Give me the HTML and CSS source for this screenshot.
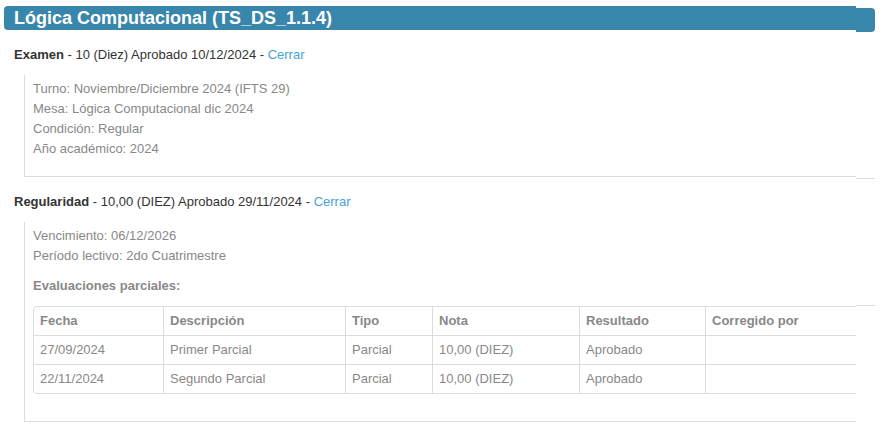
FILE: index.html
```html
<!DOCTYPE html>
<html lang="es">
<head>
<meta charset="utf-8">
<title>Lógica Computacional</title>
<link rel="stylesheet" href="styles.css">
</head>
<body>
<div class="page">
  <div class="main">
    <div class="inner">
      <h2 class="title">Lógica Computacional (TS_DS_1.1.4)</h2>

      <div class="item-head head-exam"><b>Examen</b> - 10 (Diez) Aprobado 10/12/2024 - <a href="#">Cerrar</a></div>
      <div class="detail detail-exam">
        <div>Turno: Noviembre/Diciembre 2024 (IFTS 29)</div>
        <div>Mesa: Lógica Computacional dic 2024</div>
        <div>Condición: Regular</div>
        <div>Año académico: 2024</div>
      </div>

      <div class="item-head head-reg"><b>Regularidad</b> - 10,00 (DIEZ) Aprobado 29/11/2024 - <a href="#">Cerrar</a></div>
      <div class="detail detail-reg">
        <div>Vencimiento: 06/12/2026</div>
        <div>Período lectivo: 2do Cuatrimestre</div>
        <div class="sub">Evaluaciones parciales:</div>
        <table class="grid">
          <thead>
            <tr><th class="c1">Fecha</th><th class="c2">Descripción</th><th class="c3">Tipo</th><th class="c4">Nota</th><th class="c5">Resultado</th><th class="c6">Corregido por</th></tr>
          </thead>
          <tbody>
            <tr><td>27/09/2024</td><td>Primer Parcial</td><td>Parcial</td><td>10,00 (DIEZ)</td><td>Aprobado</td><td></td></tr>
            <tr><td>22/11/2024</td><td>Segundo Parcial</td><td>Parcial</td><td>10,00 (DIEZ)</td><td>Aprobado</td><td></td></tr>
          </tbody>
        </table>
      </div>
    </div>
  </div>
  <div class="strip">
    <div class="strip-bar"></div>
    <div class="strip-line strip-line-1"></div>
    <div class="strip-line strip-line-2"></div>
  </div>
</div>
</body>
</html>
```

FILE: styles.css
```css
html, body {
  margin: 0;
  padding: 0;
  background: #fff;
}
body {
  font-family: "Liberation Sans", Arial, sans-serif;
  font-size: 13px;
  color: #333;
}
.page {
  display: flex;
  align-items: flex-start;
  padding-left: 4px;
}
.main {
  width: 852px;
  overflow: hidden;
  flex: none;
}
.inner {
  width: 900px;
}
.title {
  margin: 6px 0 0 0;
  height: 24px;
  line-height: 24px;
  background: #3986ac;
  color: #fff;
  font-size: 18px;
  font-weight: bold;
  padding-left: 10px;
  border-radius: 4px 0 0 4px;
}
.item-head {
  margin-left: 10px;
  line-height: 20px;
  color: #333;
}
.head-exam {
  margin-top: 15px;
}
.head-reg {
  margin-top: 15px;
}
.item-head b {
  font-weight: bold;
}
.item-head a {
  color: #45a3d5;
  text-decoration: none;
}
.detail {
  margin: 10px 0 0 20px;
  border-left: 1px solid #dcdcdc;
  border-bottom: 1px solid #dcdcdc;
  padding: 4px 0 17px 8px;
  color: #888;
  line-height: 20px;
}
.detail-reg {
  padding-bottom: 27px;
}
.sub {
  font-weight: bold;
  margin-top: 10px;
}
.grid {
  border-collapse: separate;
  border-spacing: 0;
  margin-top: 10px;
  border: 1px solid #dcdcdc;
  border-radius: 4px;
  width: 860px;
  color: #888;
}
.grid th, .grid td {
  text-align: left;
  padding: 0 6px;
  height: 28px;
  border-left: 1px solid #dcdcdc;
  border-top: 1px solid #dcdcdc;
  font-size: 13px;
}
.grid tr th:first-child, .grid tr td:first-child {
  border-left: none;
}
.grid thead th {
  border-top: none;
  font-weight: bold;
}
.c1 { width: 117px; }
.c2 { width: 169px; }
.c3 { width: 74px; }
.c4 { width: 134px; }
.c5 { width: 113px; }
.strip {
  width: 19px;
  flex: none;
  display: flex;
  flex-direction: column;
}
.strip-bar {
  margin-top: 8px;
  height: 24px;
  background: #3986ac;
  border-radius: 0 4px 4px 0;
}
.strip-line {
  height: 1px;
  background: #dcdcdc;
}
.strip-line-1 {
  margin-top: 146px;
}
.strip-line-2 {
  margin-top: 126px;
}
```
